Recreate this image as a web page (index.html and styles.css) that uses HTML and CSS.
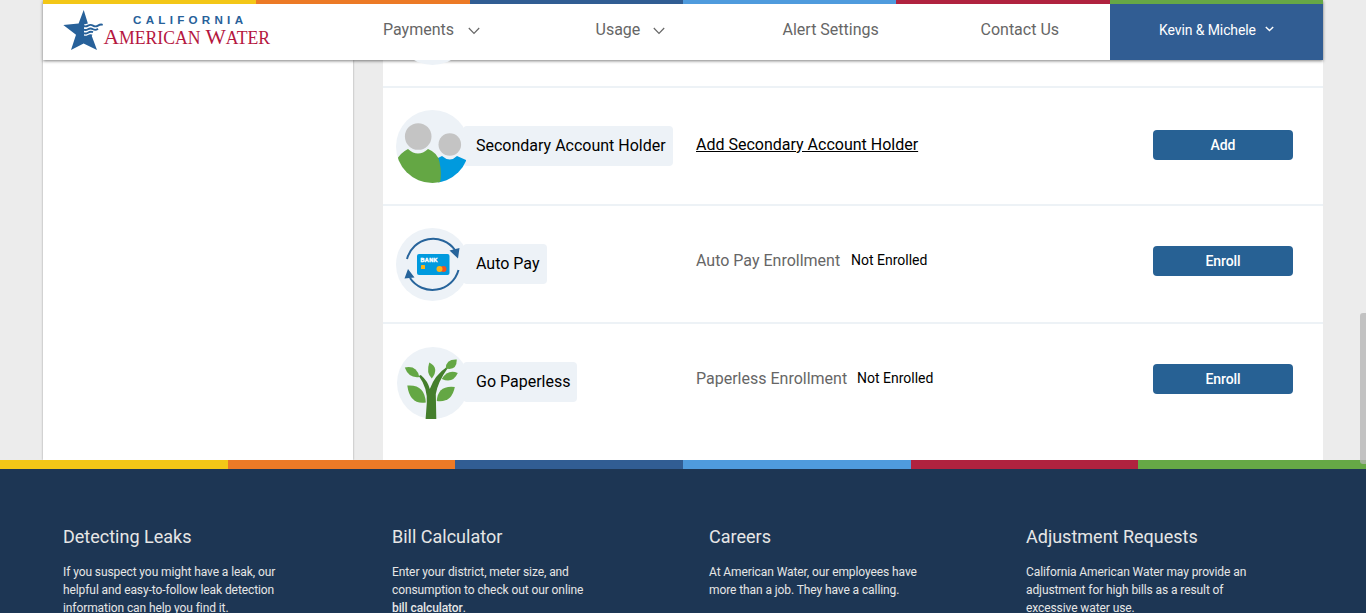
FILE: index.html
```
<!DOCTYPE html>
<html lang="en">
<head>
<meta charset="utf-8">
<title>California American Water</title>
<link rel="stylesheet" href="styles.css">
</head>
<body>
<header class="header">
  <div class="stripe stripe-top"><i class="yellow"></i><i class="orange"></i><i class="navy"></i><i class="sky"></i><i class="red"></i><i class="green"></i></div>
  <div class="header-row">
    <svg class="logo" width="240" height="56" viewBox="0 0 240 56">
      <path fill="#27619a" d="M40.700 6 L44.900 19.500 L41 20.500 L41 33 L48.600 31.500 L54 46 L40.600 39.600 L28 46 L33 30.700 L20.300 21 L35.600 19.500Z"/>
      <path d="M40 21.600q2.500 1.500 5 0t5 0t5 0t4.700-.8M40 25.200q2.500 1.500 5 0t5 0t5 -.5M40 28.700q2.500 1.500 5 0t5 -.5M40 32q2.500 1.500 5 0t4-.5" fill="none" stroke="#27619a" stroke-width="1.900"/>
      <text class="logo-state" x="90" y="20.300" textLength="110">CALIFORNIA</text>
      <text class="logo-name" x="60.500" y="39.700" textLength="166.500" lengthAdjust="spacingAndGlyphs">A<tspan class="small">MERICAN</tspan> W<tspan class="small">ATER</tspan></text>
    </svg>
    <nav class="nav">
      <a class="nav-pay">Payments<svg width="12" height="8" viewBox="0 0 12 8"><path d="M.8 1 6 6.300 11.200 1"/></svg></a>
      <a class="nav-use">Usage<svg width="12" height="8" viewBox="0 0 12 8"><path d="M.8 1 6 6.300 11.200 1"/></svg></a>
      <a class="nav-alert">Alert Settings</a>
      <a class="nav-contact">Contact Us</a>
    </nav>
    <div class="user">Kevin &amp; Michele<svg width="9" height="6" viewBox="0 0 9 6"><path d="M.8 1 4.500 4.500 8.200 1"/></svg></div>
  </div>
</header>
<main class="content">
  <aside class="sidebar"></aside>
  <section class="settings">
    <div class="row row-clipped"><svg class="row-icon" width="74" height="73" viewBox="0 0 74 73"><circle class="disc" cx="36.500" cy="36.500" r="36.500"/></svg></div>
    <div class="row">
      <svg class="row-icon" width="74" height="73" viewBox="0 0 74 73">
        <defs><clipPath id="disc-clip"><circle cx="36.500" cy="36.500" r="36.500"/></clipPath></defs>
        <circle class="disc" cx="36.500" cy="36.500" r="36.500"/>
        <g clip-path="url(#disc-clip)">
          <path fill="#009ade" d="M42 48 L46 46 Q54 53 61 46 L70 50 V73 H42Z"/>
          <path fill="#64a744" d="M0 51 Q4 43 12 39 Q22 48 32 39 Q42 43 43.500 52 Q46 64 44 73 H0Z"/>
        </g>
        <circle cx="22.200" cy="26.500" r="13.300" fill="#c4c4c4"/>
        <circle cx="53.800" cy="34.500" r="11.300" fill="#c4c4c4"/>
      </svg>
      <h2 class="pill pill-account">Secondary Account Holder</h2>
      <div class="detail detail-link"><a>Add Secondary Account Holder</a></div>
      <button class="btn">Add</button>
    </div>
    <div class="row">
      <svg class="row-icon" width="74" height="73" viewBox="0 0 74 73">
        <circle class="disc" cx="36.500" cy="36.500" r="36.500"/>
        <g fill="none" stroke="#27649b" stroke-width="2"><path d="M11 31 A27 27 0 0 1 59 22"/><path d="M62.500 42 A27 27 0 0 1 14 50"/></g>
        <path fill="#27649b" d="M53.500 22.500 L63.500 20 L62 30.500Z M12 41 L8.500 50.500 L18.500 49.500Z"/>
        <rect x="21" y="26" width="32.500" height="21" rx="2" fill="#009ade"/>
        <text class="bank" x="24.500" y="34" textLength="17">BANK</text>
        <rect x="25" y="37" width="4" height="4" rx=".5" fill="#fbb416"/>
        <circle cx="47.500" cy="41" r="3" fill="#f4511e"/><circle cx="43.500" cy="41" r="3" fill="#fbb416"/>
      </svg>
      <h2 class="pill pill-auto">Auto Pay</h2>
      <div class="detail"><span class="label label-auto">Auto Pay Enrollment</span><span class="status">Not Enrolled</span></div>
      <button class="btn btn-enroll">Enroll</button>
    </div>
    <div class="row row-last">
      <svg class="row-icon" width="74" height="73" viewBox="0 0 74 73">
        <circle class="disc" cx="37" cy="37" r="36"/>
        <g transform="translate(.8 0)">
          <path fill="#447e2c" d="M28.800 73 L30 57 Q31 42 22 30 L24 29 Q31 35 33 43 Q38 29 50 21 L51 22 Q41 36 39 48 L39.500 73Z"/>
          <g fill="#64a744">
            <path d="M8 21.500 Q20 19 22.500 31 Q12 32.500 8 21.500Z"/>
            <path d="M32.500 16.500 Q43 22 35 32.500 Q29 27 32.500 16.500Z"/>
            <path d="M60 13.500 Q49 13 49 22.500 Q60 25 60 13.500Z"/>
            <path d="M61 27 Q51 23 45 33 Q56 38 61 27Z"/>
            <path d="M10.500 39.500 Q28 38 29 56.500 Q13 59 10.500 39.500Z"/>
            <path d="M58 41 Q41 39 40 55 Q55 57 58 41Z"/>
          </g>
        </g>
      </svg>
      <h2 class="pill pill-paper">Go Paperless</h2>
      <div class="detail"><span class="label label-paper">Paperless Enrollment</span><span class="status">Not Enrolled</span></div>
      <button class="btn btn-enroll">Enroll</button>
    </div>
  </section>
</main>
<footer class="footer">
  <div class="stripe stripe-footer"><i class="yellow"></i><i class="orange"></i><i class="navy"></i><i class="sky"></i><i class="red"></i><i class="green"></i></div>
  <div class="footer-grid">
    <div><h3>Detecting Leaks</h3><p>If you suspect you might have a leak, our<br>helpful and easy-to-follow leak detection<br>information can help you find it.</p></div>
    <div><h3>Bill Calculator</h3><p>Enter your district, meter size, and<br>consumption to check out our online<br><b>bill calculator</b>.</p></div>
    <div><h3>Careers</h3><p>At American Water, our employees have<br>more than a job. They have a calling.</p></div>
    <div><h3>Adjustment Requests</h3><p>California American Water may provide an<br>adjustment for high bills as a result of<br>excessive water use.</p></div>
  </div>
</footer>
<div class="scroll-thumb"></div>
</body>
</html>
```
FILE: styles.css
```
* { box-sizing: border-box; }
body {
  margin: 0;
  height: 613px;
  overflow: hidden;
  background: #ececec;
  font-family: Roboto, "Liberation Sans", sans-serif;
  color: #000;
}
.stripe { display: flex; }
.stripe i { flex: 1; }
.stripe-top { height: 4px; }
.stripe-footer { height: 9px; }
.yellow { background: #f3c717; }
.orange { background: #ec7a26; }
.navy { background: #315d93; }
.sky { background: #4f9bdd; }
.red { background: #b0223f; }
.green { background: #66a846; }

.header {
  position: relative;
  z-index: 1;
  width: 1280px;
  height: 60px;
  margin: 0 auto;
  background: #fff;
  box-shadow: 0 1px 3px rgba(0, 0, 0, .5);
}
.header-row { display: flex; height: 56px; }
.logo { flex: none; }
.logo-state { font: bold 11.6px "Liberation Sans", sans-serif; fill: #27619a; }
.logo-name { font: 22px "Liberation Serif", serif; fill: #b5173f; }
.logo-name .small { font-size: 18px; }
.nav {
  display: grid;
  grid-template-columns: 212.5px 187px 198px 129px;
  flex: 1;
  padding-left: 100px;
  font-size: 16px;
  line-height: 51px;
  color: #666;
}
.nav a { white-space: nowrap; }
.nav svg { margin-left: 14px; fill: none; stroke: #666; stroke-width: 1.2; }
.nav .nav-use svg { margin-left: 13px; }
.user {
  width: 213px;
  padding-left: 49px;
  background: #315d93;
  color: #fff;
  font-size: 14px;
  letter-spacing: -.1px;
  line-height: 52px;
}
.user svg { margin-left: 9px; vertical-align: 3px; fill: none; stroke: #fff; stroke-width: 1.4; }

.content { display: flex; gap: 30px; width: 1280px; height: 400px; margin: 0 auto; }
.sidebar { width: 310px; background: #fff; box-shadow: 0 0 2px rgba(0, 0, 0, .35); }
.settings { width: 940px; background: #fff; }
.row {
  display: flex;
  align-items: flex-start;
  height: 118px;
  padding: 22px 30px 0 13px;
  border-bottom: 2px solid #edf2f6;
}
.row-clipped { height: 28px; padding-top: 0; overflow: hidden; }
.row-clipped .row-icon { margin-top: -68px; }
.row-last { height: 136px; border: 0; }
.row-icon { flex: none; z-index: 1; }
.disc { fill: #edf2f7; stroke: none; }
.bank { font: bold 5.5px "Liberation Sans", sans-serif; fill: #fff; stroke: #fff; stroke-width: .4; }
.pill {
  height: 40px;
  margin: 16px 0 0 -7px;
  padding-left: 13px;
  border-radius: 4px;
  background: #edf2f7;
  font-size: 16px;
  font-weight: 400;
  line-height: 39px;
  white-space: nowrap;
}
.pill-account { width: 210px; margin-right: 23px; }
.pill-auto { width: 84px; margin-right: 149px; }
.pill-paper { width: 114px; margin-right: 119px; }
.detail { display: flex; align-items: flex-start; margin-top: 22px; line-height: 20px; white-space: nowrap; }
.detail-link { margin-top: 25px; }
.detail-link a { text-decoration: underline; }
.label { padding-top: 1px; color: #666; }
.label-auto { width: 155px; }
.label-paper { width: 161px; }
.status { font-size: 14px; }
.btn {
  width: 140px;
  height: 30px;
  margin: 20px 0 0 auto;
  padding: 0;
  border: 0;
  border-radius: 4px;
  background: #276194;
  color: #fff;
  font: 500 14px Roboto, sans-serif;
  letter-spacing: -.1px;
}
.btn-enroll { margin-top: 18px; }

.footer { height: 153px; background: #1d3654; color: #e6e6e6; overflow: hidden; }
.footer-grid { display: grid; grid-template-columns: 329px 317px 317px 300px; padding: 56px 0 0 63px; }
.footer h3 { margin: 0; font-size: 18px; font-weight: 400; line-height: 24px; }
.footer p { margin: 14px 0 0; font-size: 12px; letter-spacing: -.09px; line-height: 18px; }
.footer b { font-weight: 500; }
.scroll-thumb {
  position: absolute;
  z-index: 2;
  top: 313px;
  right: 0;
  width: 6px;
  height: 151px;
  border-radius: 3px 0 0 3px;
  background: rgba(180, 180, 180, .75);
}
```
